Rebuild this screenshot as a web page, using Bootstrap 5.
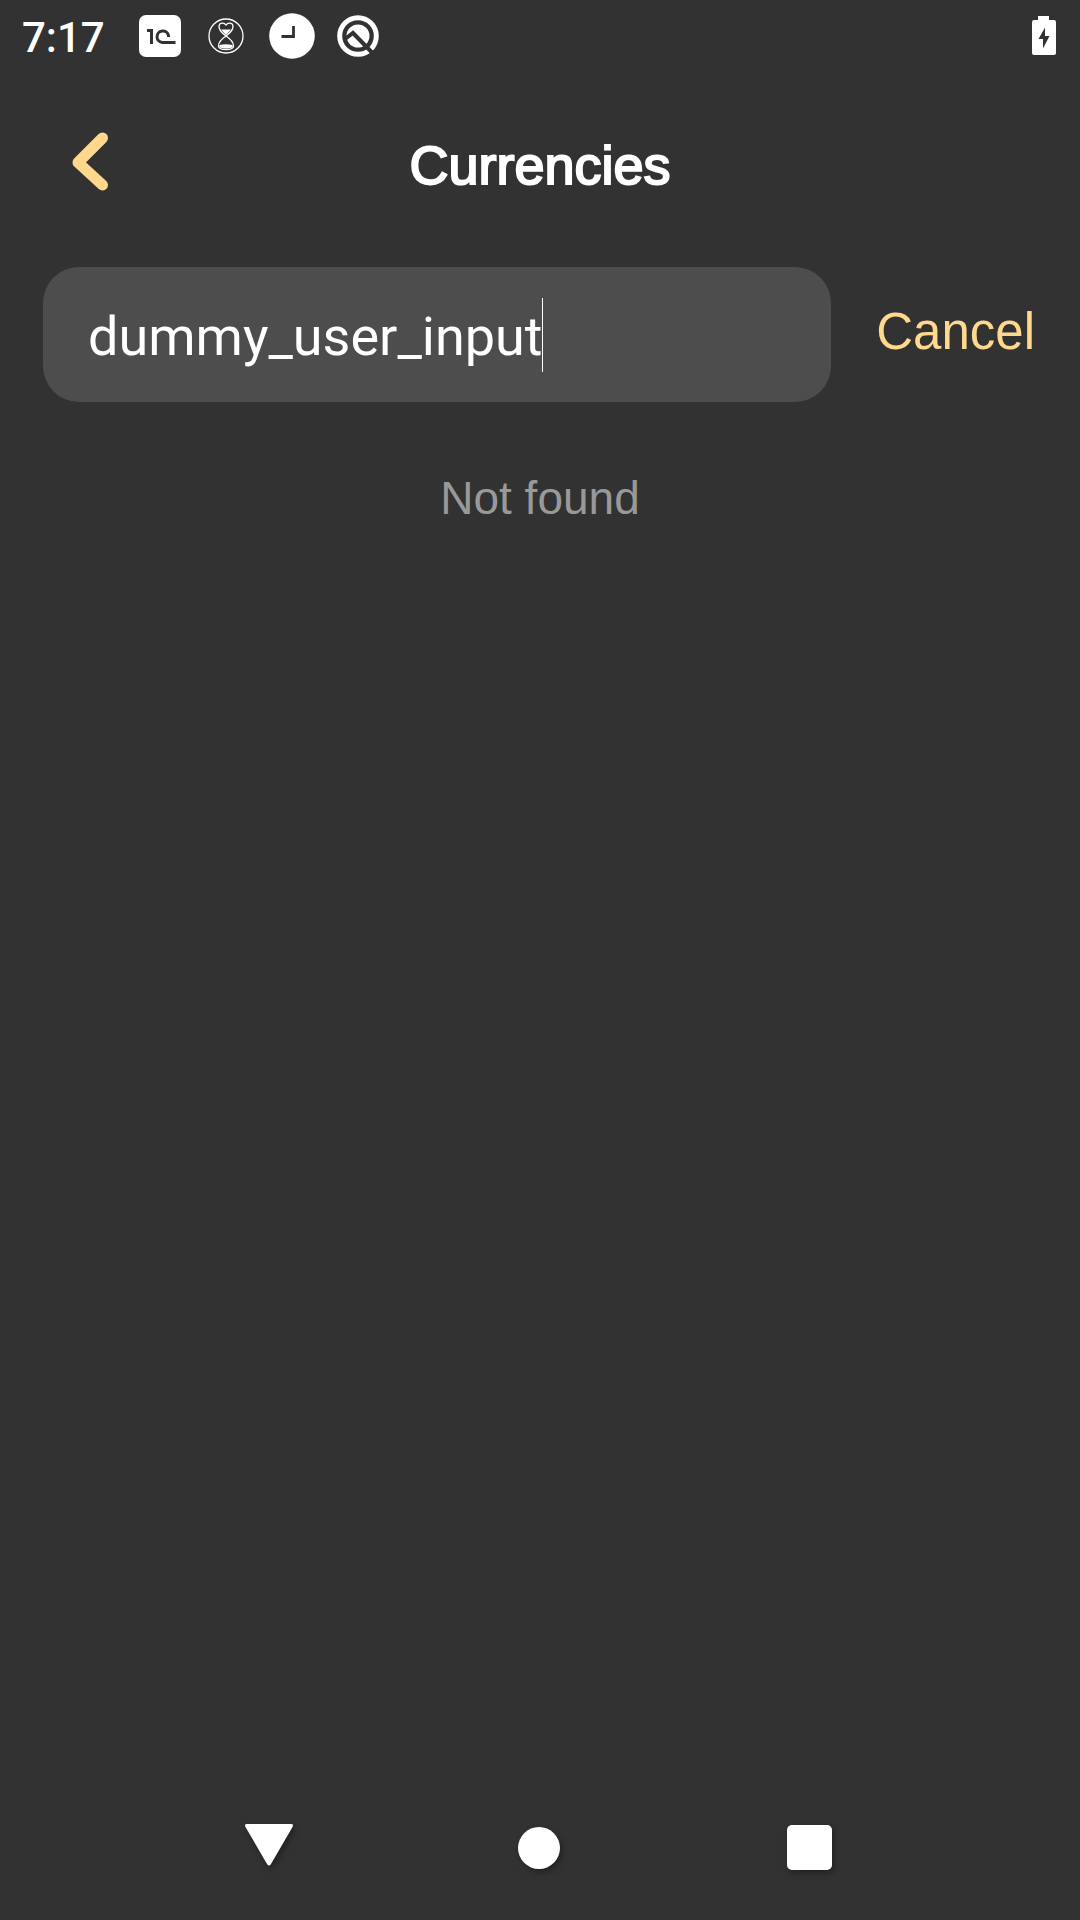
<!DOCTYPE html>
<html lang="en">
<head>
<meta charset="utf-8">
<meta name="viewport" content="width=device-width, initial-scale=1">
<title>Currencies</title>
<link href="https://cdn.jsdelivr.net/npm/bootstrap@5.3.0/dist/css/bootstrap.min.css" rel="stylesheet">
<style>
  :root { --screen: #323232; --field: #4d4d4d; --accent: #ffd88d; --muted: #999999; }
  body { background: var(--screen); color: #fff; font-family: "Liberation Sans", Arial, sans-serif; }
  svg { display: block; }
  .status-bar { height: 72px; padding: 0 24px 0 22px; }
  .status-time { font: 500 42px/48px Roboto, sans-serif; margin-right: 32px; padding-top: 3px; }
  .status-icons { gap: 20px; }
  .status-icons svg { width: 46px; }
  .title-bar { height: 195px; padding: 0 64px 15px; }
  .title-bar .side { width: 52px; }
  .screen-title { font-size: 54px; line-height: 64px; font-weight: 400; -webkit-text-stroke: 2px #fff; padding-top: 6px; }
  .search-row { padding: 0 45px 0 43px; gap: 45px; }
  .search-field { height: 135px; border-radius: 36px; background: var(--field); padding: 5px 45px 0; }
  .search-field input { width: 454px; height: 76px; padding: 0; border: 0; outline: 0; background: transparent; color: #fff; font: 400 54px/76px Roboto, sans-serif; }
  .caret { width: 1px; height: 74px; background: #fff; margin-bottom: 5px; }
  .cancel-btn { color: var(--accent); font-size: 51px; line-height: 60px; padding: 0 0 6px; border: 0; }
  .empty-note { color: var(--muted); font-size: 46px; line-height: 56px; padding-top: 68px; }
  .system-nav { height: 144px; padding: 0 134px 0 132px; }
  .system-nav svg { filter: drop-shadow(2px 3px 3px rgba(0,0,0,.35)); }
</style>
</head>
<body class="min-vh-100 d-flex flex-column">
<header class="status-bar d-flex align-items-center">
  <span class="status-time">7:17</span>
  <div class="status-icons d-flex align-items-center">
    <svg height="42" viewBox="0 0 42 42" aria-hidden="true"><rect width="42" height="42" rx="7" fill="#fff"/><path d="M8 15.500h4.500V29M29.500 22V20.500a5.800 5.800 0 1 0-6 7H36.500" fill="none" stroke="#323232" stroke-width="3"/></svg>
    <svg height="36" viewBox="0 0 36 36" aria-hidden="true"><g fill="none" stroke="#fff" stroke-width="1.300"><circle cx="18" cy="18" r="17"/><path d="M18 18C13 14 11 12 11 8.500C11 4.500 16 4 18 7C20 4 25 4.500 25 8.500C25 12 23 14 18 18C12 22 10.500 25 10.500 28Q10.500 31.500 18 31.500Q25.500 31.500 25.500 28C25.500 25 24 22 18 18Z"/></g><path d="M13 11.500h10L18 17zM11.500 27q6.500-1.500 13 0v2.500q-6.500 2-13 0z" fill="#fff"/></svg>
    <svg height="46" viewBox="0 0 46 46" aria-hidden="true"><circle cx="23" cy="23" r="22.800" fill="#fff"/><path d="M24.500 13v10.500H12.500" fill="none" stroke="#323232" stroke-width="2.800"/></svg>
    <svg height="42" viewBox="0 0 42 42" aria-hidden="true"><circle cx="21" cy="21" r="18.300" fill="none" stroke="#fff" stroke-width="5"/><circle cx="21" cy="21" r="11.500" fill="#fff"/><path d="M8 24L16 18L36 38.500" fill="none" stroke="#323232" stroke-width="4"/></svg>
  </div>
  <svg class="ms-auto" width="25" height="40" viewBox="0 0 25 40" aria-label="Battery charging"><path d="M7 0h11v4h5q2 0 2 2v31q0 2-2 2H3q-2 0-2-2V6q0-2 2-2h4z" fill="#fff"/><path d="M14 11.500L7.500 23H12v9.500L18.500 20H14z" fill="#323232"/></svg>
</header>

<main class="flex-grow-1">
  <div class="title-bar d-flex align-items-center justify-content-between">
    <a href="#" class="side d-block" aria-label="Back"><svg width="52" height="60" viewBox="0 0 52 60"><path d="M38.500 6L14 30.500L38.500 53" fill="none" stroke="#ffd88d" stroke-width="11" stroke-linecap="round" stroke-linejoin="round"/></svg></a>
    <h1 class="screen-title m-0">Currencies</h1>
    <span class="side"></span>
  </div>

  <form class="search-row d-flex align-items-center">
    <div class="search-field flex-grow-1 d-flex align-items-center">
      <input type="text" value="dummy_user_input" aria-label="Search currencies" autocomplete="off" spellcheck="false">
      <span class="caret"></span>
    </div>
    <button type="button" class="cancel-btn btn">Cancel</button>
  </form>

  <p class="empty-note text-center m-0">Not found</p>
</main>

<nav class="system-nav d-flex align-items-center" aria-label="System">
  <button type="button" class="btn p-0 border-0 flex-fill d-flex justify-content-center" aria-label="Back"><svg width="50" height="48" viewBox="0 0 50 48"><path d="M4 0H48Q51 0 49.500 3L28 40Q26 43 24 40L2.500 3Q1 0 4 0Z" fill="#fff"/></svg></button>
  <button type="button" class="btn p-0 border-0 flex-fill d-flex justify-content-center" aria-label="Home"><svg width="50" height="48" viewBox="0 0 50 48"><circle cx="25" cy="24" r="21" fill="#fff"/></svg></button>
  <button type="button" class="btn p-0 border-0 flex-fill d-flex justify-content-center" aria-label="Recent apps"><svg width="50" height="48" viewBox="0 0 50 48"><rect x="2" y="1" width="45" height="45" rx="5" fill="#fff"/></svg></button>
</nav>
<script src="https://cdn.jsdelivr.net/npm/bootstrap@5.3.0/dist/js/bootstrap.bundle.min.js"></script>
</body>
</html>
